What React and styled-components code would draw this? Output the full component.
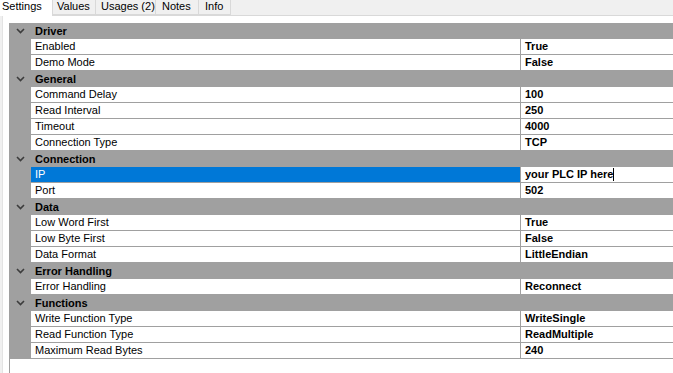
import React from "react";
import styled, { createGlobalStyle } from "styled-components";

const Global = createGlobalStyle`
  html, body { margin: 0; padding: 0; background: #f0f0f0; overflow: hidden; }
  body { font-family: "Liberation Sans", Arial, sans-serif; font-size: 11px; color: #000; }
  #root { width: 673px; height: 373px; overflow: hidden; }
`;

const Frame = styled.div`
  display: flex;
  flex-direction: column;
  width: 673px;
  height: 373px;
  overflow: hidden;
`;

const TabStrip = styled.div`
  display: flex;
  align-items: flex-end;
  height: 15px;
  margin-top: -3px;
  padding-top: 3px;
  border-bottom: 1px solid #d9d9d9;
  box-sizing: content-box;
`;

const Tab = styled.div`
  box-sizing: border-box;
  width: ${(p) => p.$w}px;
  height: ${(p) => (p.$active ? 18 : 17)}px;
  margin-bottom: ${(p) => (p.$active ? -1 : 0)}px;
  padding-left: ${(p) => p.$pl}px;
  line-height: 14px;
  background: ${(p) => (p.$active ? "#ffffff" : "#f0f0f0")};
  border: 1px solid #d9d9d9;
  border-left-width: ${(p) => (p.$first ? 0 : 1)}px;
  border-bottom: ${(p) => (p.$active ? "none" : "1px solid #d9d9d9")};
  margin-left: ${(p) => (p.$first ? 0 : -1)}px;
  white-space: nowrap;
  color: #000;
`;

const Page = styled.div`
  flex: 1;
  display: flex;
  background: #ffffff;
  margin-left: 2px;
  border-left: 1px solid #e3e3e3;
  padding: 7px 0 0 6px;
  min-height: 0;
`;

const Grid = styled.div`
  flex: 1;
  display: flex;
  flex-direction: column;
  border-left: 1px solid #a0a0a0;
  min-width: 0;
`;

const CategoryRow = styled.div`
  display: flex;
  align-items: center;
  height: 16px;
  background: #a0a0a0;
  font-weight: bold;
`;

const Chevron = styled.div`
  width: 21px;
  height: 16px;
  display: flex;
  align-items: center;
  justify-content: center;
  flex: none;
`;

const CategoryLabel = styled.div`
  padding-left: 4px;
  white-space: nowrap;
`;

const Row = styled.div`
  display: grid;
  grid-template-columns: 21px 490px 1fr;
  height: 16px;
`;

const Gutter = styled.div`
  background: #a0a0a0;
`;

const LabelCell = styled.div`
  box-sizing: border-box;
  padding-left: 4px;
  line-height: 15px;
  border-bottom: 1px solid #a0a0a0;
  border-right: 1px solid #a0a0a0;
  background: ${(p) => (p.$selected ? "#0078d7" : "#ffffff")};
  color: ${(p) => (p.$selected ? "#ffffff" : "#000000")};
  white-space: nowrap;
  overflow: hidden;
`;

const ValueCell = styled.div`
  box-sizing: border-box;
  padding-left: 4px;
  line-height: 15px;
  border-bottom: 1px solid #a0a0a0;
  background: #ffffff;
  font-weight: bold;
  white-space: nowrap;
  overflow: hidden;
`;

const Caret = styled.span`
  display: inline-block;
  width: 1px;
  height: 13px;
  background: #000;
  vertical-align: -3px;
`;

const ChevronIcon = () => (
  <svg width="9" height="6" viewBox="0 0 9 6">
    <path d="M1 1 L4.5 4.5 L8 1" fill="none" stroke="#3c3c3c" strokeWidth="1.6" />
  </svg>
);

const data = [
  {
    name: "Driver",
    rows: [
      ["Enabled", "True"],
      ["Demo Mode", "False"],
    ],
  },
  {
    name: "General",
    rows: [
      ["Command Delay", "100"],
      ["Read Interval", "250"],
      ["Timeout", "4000"],
      ["Connection Type", "TCP"],
    ],
  },
  {
    name: "Connection",
    rows: [
      ["IP", "your PLC IP here", true],
      ["Port", "502"],
    ],
  },
  {
    name: "Data",
    rows: [
      ["Low Word First", "True"],
      ["Low Byte First", "False"],
      ["Data Format", "LittleEndian"],
    ],
  },
  {
    name: "Error Handling",
    rows: [["Error Handling", "Reconnect"]],
  },
  {
    name: "Functions",
    rows: [
      ["Write Function Type", "WriteSingle"],
      ["Read Function Type", "ReadMultiple"],
      ["Maximum Read Bytes", "240"],
    ],
  },
];

const tabs = [
  { label: "Settings", w: 53, pl: 2, active: true },
  { label: "Values", w: 44, pl: 4 },
  { label: "Usages (2)", w: 61, pl: 5 },
  { label: "Notes", w: 44, pl: 6 },
  { label: "Info", w: 33, pl: 6 },
];

export default function App() {
  return (
    <>
      <Global />
      <Frame>
        <TabStrip>
          {tabs.map((t, i) => (
            <Tab key={t.label} $w={t.w} $pl={t.pl} $active={t.active} $first={i === 0}>
              {t.label}
            </Tab>
          ))}
        </TabStrip>
        <Page>
          <Grid>
            {data.map((cat) => (
              <React.Fragment key={cat.name}>
                <CategoryRow>
                  <Chevron>
                    <ChevronIcon />
                  </Chevron>
                  <CategoryLabel>{cat.name}</CategoryLabel>
                </CategoryRow>
                {cat.rows.map(([label, value, selected]) => (
                  <Row key={label}>
                    <Gutter />
                    <LabelCell $selected={selected}>{label}</LabelCell>
                    <ValueCell>
                      {value}
                      {selected && <Caret />}
                    </ValueCell>
                  </Row>
                ))}
              </React.Fragment>
            ))}
          </Grid>
        </Page>
      </Frame>
    </>
  );
}
